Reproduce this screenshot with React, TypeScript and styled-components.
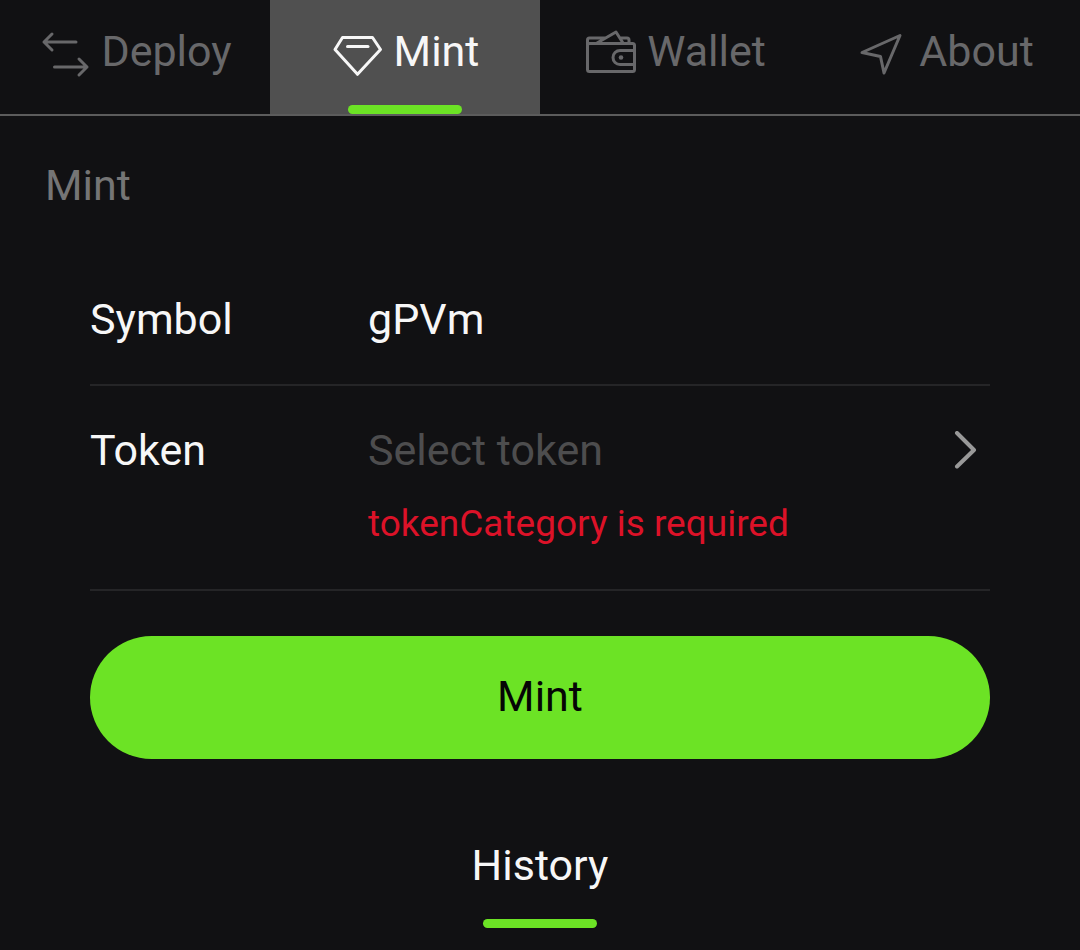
import { useState } from "react"
import type { ReactNode } from "react"
import styled, { createGlobalStyle } from "styled-components"

const TABS: { name: string; icon: ReactNode }[] = [
  {
    name: "Deploy",
    icon: (
      <>
        <path d="M38 17H6M14 9L6 17l8 8" />
        <path d="M16.5 42H49M41 34l8 8-8 8" />
      </>
    )
  },
  {
    name: "Mint",
    icon: (
      <>
        <path d="M11.5 12.5H41.5L49.5 24.5L26.5 49.3L4 24.5Z" />
        <path d="M16.5 21.5H37" />
      </>
    )
  },
  {
    name: "Wallet",
    icon: (
      <>
        <rect x="3.5" y="18.5" width="47" height="28" rx="2" />
        <path d="M3.5 20V15q0-2 2-2H21M13 18L32 7l7 11M37 13h6q2 0 2 2v3.5" />
        <path d="M50.5 25.5H36a7 7 0 0 0 0 14H50.5" />
        <circle cx="37" cy="32.5" r="2.3" fill="currentColor" stroke="none" />
      </>
    )
  },
  {
    name: "About",
    icon: <path d="M6 27.5L44 10.5L28 48L24.5 31.5Z" />
  }
]

export default function App() {
  const [current, setCurrent] = useState("Mint")
  const [symbol, setSymbol] = useState("gPVm")

  return (
    <>
      <GlobalStyle />
      <TabBar>
        {TABS.map(({ name, icon }) => (
          <Tab key={name} $active={name === current} onClick={() => setCurrent(name)}>
            <TabTitle>
              <TabIcon viewBox="0 0 54 53" aria-hidden="true">
                {icon}
              </TabIcon>
              {name}
            </TabTitle>
            <Indicator $active={name === current} />
          </Tab>
        ))}
      </TabBar>
      <Main>
        <Title>Mint</Title>
        <Form onSubmit={(e) => e.preventDefault()}>
          <Row>
            <Label htmlFor="symbol">Symbol</Label>
            <Input id="symbol" value={symbol} onChange={(e) => setSymbol(e.target.value)} />
          </Row>
          <Row>
            <Label htmlFor="token">Token</Label>
            <div>
              <Picker id="token" type="button" aria-describedby="token-error">
                Select token
                <Arrow viewBox="0 0 36 39" aria-hidden="true">
                  <path d="M3 2L20 19L3 35.5" />
                </Arrow>
              </Picker>
              <ErrorText id="token-error">tokenCategory is required</ErrorText>
            </div>
          </Row>
          <Submit type="submit">Mint</Submit>
        </Form>
        <History>
          <HistoryTab type="button">
            History
            <Indicator $active />
          </HistoryTab>
        </History>
      </Main>
    </>
  )
}

const GlobalStyle = createGlobalStyle`
  * {
    box-sizing: border-box;
  }

  body {
    margin: 0;
    background: #111113;
    color: #f7f7f7;
    font-family: Roboto, sans-serif;
    font-size: 43px;
    line-height: 63px;
  }

  button,
  input {
    margin: 0;
    padding: 0;
    border: none;
    background: none;
    color: inherit;
    font: inherit;
  }

  button {
    cursor: pointer;
  }
`

const TabBar = styled.nav`
  display: grid;
  grid-template-columns: repeat(4, 1fr);
  border-bottom: 2px solid #5c5c5c;
`

const Tab = styled.button<{ $active: boolean }>`
  display: flex;
  flex-direction: column;
  align-items: center;
  padding-top: 20px;
  background: ${({ $active }) => ($active ? "#505050" : "transparent")};
  color: ${({ $active }) => ($active ? "#f7f7f7" : "#68686a")};
`

const TabTitle = styled.span`
  display: flex;
  align-items: center;
  gap: 9px;
`

const TabIcon = styled.svg`
  flex: none;
  width: 54px;
  height: 53px;
  fill: none;
  stroke: currentColor;
  stroke-width: 3;
  stroke-linecap: round;
  stroke-linejoin: round;
`

const Indicator = styled.span<{ $active: boolean }>`
  width: 114px;
  height: 9px;
  margin-top: 22px;
  border-radius: 5px;
  background: ${({ $active }) => ($active ? "#6ce325" : "transparent")};
`

const Main = styled.main`
  padding-top: 38px;
`

const Title = styled.h1`
  margin: 0 0 38px;
  padding: 0 45px;
  color: #757575;
  font-size: 43px;
  font-weight: 400;
`

const Form = styled.form`
  padding: 0 90px;
`

const Row = styled.div`
  display: grid;
  grid-template-columns: 278px 1fr;
  padding: 33px 0;
  border-bottom: 2px solid #252527;
`

const Label = styled.label`
  color: #f7f7f7;
`

const Input = styled.input`
  width: 100%;
  height: 63px;
  outline: none;
`

const Picker = styled.button`
  display: flex;
  align-items: center;
  justify-content: space-between;
  width: 100%;
  color: #4d4d4e;
`

const Arrow = styled.svg`
  flex: none;
  width: 36px;
  height: 39px;
  fill: none;
  stroke: #999;
  stroke-width: 4;
  stroke-linecap: round;
  stroke-linejoin: round;
`

const ErrorText = styled.p`
  margin: 0;
  padding: 15px 0 5px;
  color: #dc1228;
  font-size: 37px;
  line-height: 54px;
`

const Submit = styled.button`
  width: 100%;
  margin-top: 45px;
  padding: 29px 30px 31px;
  border-radius: 62px;
  background: #6ce325;
  color: #050505;
`

const History = styled.section`
  display: flex;
  justify-content: center;
  margin-top: 75px;
`

const HistoryTab = styled.button`
  display: flex;
  flex-direction: column;
  align-items: center;
`
